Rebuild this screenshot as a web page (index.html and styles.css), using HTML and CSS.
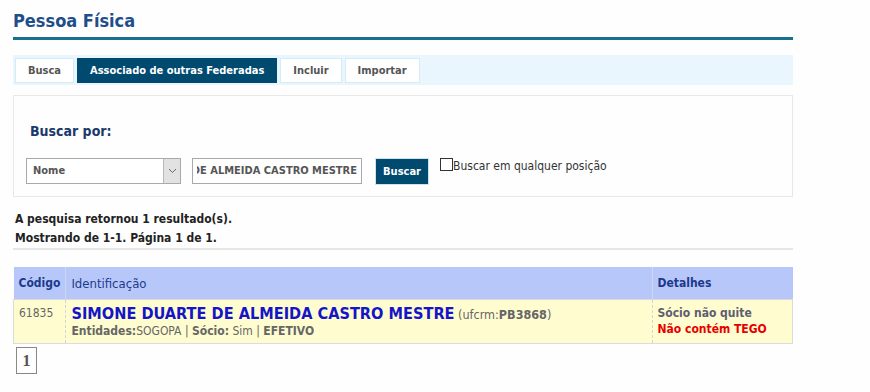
FILE: index.html
```html
<!DOCTYPE html>
<html lang="pt-BR">
<head>
  <meta charset="UTF-8" />
  <title>Pessoa Física</title>
  <link rel="stylesheet" href="styles.css">
</head>
<body>
  <div class="page">
    <h1 class="page-title">Pessoa Física</h1>

    <div class="tabs">
      <a class="tab" href="#">Busca</a>
      <a class="tab active" href="#">Associado de outras Federadas</a>
      <a class="tab" href="#">Incluir</a>
      <a class="tab" href="#">Importar</a>
    </div>

    <div class="search-box">
      <h3>Buscar por:</h3>
      <form class="search-row">
        <div class="select-wrap">
          <select class="field-select">
            <option>Nome</option>
          </select>
          <span class="select-arrow">
            <svg width="9" height="6" viewBox="0 0 9 6"><path d="M1 1l3.5 3.5L8 1" fill="none" stroke="#666" stroke-width="1"/></svg>
          </span>
        </div>
        <input class="field-text" type="text" dir="rtl" value="SIMONE DUARTE DE ALMEIDA CASTRO MESTRE">
        <button type="submit" class="btn-buscar">Buscar</button>
        <label class="check"><span class="box"></span>Buscar em qualquer posição</label>
      </form>
    </div>

    <div class="summary">
      A pesquisa retornou 1 resultado(s).<br>
      Mostrando de 1-1. Página 1 de 1.
    </div>

    <table class="results">
      <thead>
        <tr>
          <th class="col-cod">Código</th>
          <th class="col-id">Identificação</th>
          <th class="col-det">Detalhes</th>
        </tr>
      </thead>
      <tbody>
        <tr>
          <td class="cod">61835</td>
          <td>
            <a class="name" href="#">SIMONE DUARTE DE ALMEIDA CASTRO MESTRE</a>
            <span class="crm">(ufcrm:<b>PB3868</b>)</span>
            <div class="meta"><b>Entidades:</b>SOGOPA | <b>Sócio:</b> Sim | <b>EFETIVO</b></div>
          </td>
          <td class="det">
            <div class="quite">Sócio não quite</div>
            <div class="tego">Não contém TEGO</div>
          </td>
        </tr>
      </tbody>
    </table>

    <div class="pager"><span class="page-num">1</span></div>
  </div>
</body>
</html>
```

FILE: styles.css
```css
body {
  margin: 0;
  background-color: #fefefe;
  font-family: 'DejaVu Sans Condensed', 'DejaVu Sans', sans-serif;
  font-size: 12px;
  color: #333;
}

.page {
  width: 780px;
  margin-left: 13px;
  padding-top: 9px;
}

.page-title {
  margin: 0;
  font-size: 18px;
  font-weight: bold;
  color: #1f4e8c;
  line-height: 24px;
  padding-bottom: 4px;
  border-bottom: 3px solid #17708f;
}

.tabs {
  margin-top: 15px;
  height: 30px;
  background-color: #eaf6fd;
  display: flex;
  align-items: center;
  gap: 3px;
  padding-left: 2px;
}

.tab {
  display: block;
  height: 23px;
  line-height: 23px;
  padding: 0 12px;
  background-color: #fff;
  border: 1px solid #d5ebf7;
  color: #555;
  font-weight: bold;
  font-size: 11px;
  text-decoration: none;
}

.tab.active {
  background-color: #004a70;
  border-color: #004a70;
  color: #fff;
}

.search-box {
  margin-top: 10px;
  border: 1px solid #e8e8e8;
  height: 100px;
  padding: 0 12px;
}

.search-box h3 {
  margin: 26px 0 0 4px;
  font-size: 14px;
  font-weight: bold;
  color: #1a3a6a;
  line-height: 18px;
}

.search-row {
  margin-top: 16px;
  display: flex;
  align-items: center;
}

.select-wrap {
  position: relative;
  width: 155px;
  height: 26px;
}

.field-select {
  width: 155px;
  height: 26px;
  border: 1px solid #a9a9a9;
  background-color: #fff;
  padding-left: 6px;
  font-family: inherit;
  font-size: 11px;
  font-weight: bold;
  color: #555;
  appearance: none;
  -webkit-appearance: none;
  margin: 0;
}

.select-arrow {
  position: absolute;
  right: 1px;
  top: 1px;
  width: 16px;
  height: 24px;
  background-color: #e2e2e2;
  border-left: 1px solid #b8b8b8;
  display: flex;
  align-items: center;
  justify-content: center;
  pointer-events: none;
}

.field-text {
  margin: 0 0 0 11px;
  width: 170px;
  height: 26px;
  box-sizing: border-box;
  border: 1px solid #a9a9a9;
  padding: 0 4px;
  font-family: inherit;
  font-size: 11px;
  font-weight: bold;
  color: #555;
}

.btn-buscar {
  margin-left: 13px;
  margin-top: 2px;
  width: 54px;
  height: 27px;
  background-color: #004a70;
  border: 1px solid #cfe3ee;
  color: #fff;
  font-family: inherit;
  font-size: 11px;
  font-weight: bold;
  cursor: pointer;
}

.check {
  margin-left: 11px;
  align-self: flex-start;
  margin-top: 2px;
  display: flex;
  align-items: center;
  font-size: 12px;
  line-height: 16px;
  color: #333;
}

.check .box {
  width: 11px;
  height: 11px;
  border: 1px solid #333;
  background-color: #fff;
  align-self: flex-start;
}

.summary {
  margin-top: 13px;
  padding-left: 2px;
  font-weight: bold;
  color: #222;
  line-height: 19px;
  padding-bottom: 0;
  border-bottom: 2px solid #e6e6e6;
}

.results {
  margin-top: 17px;
  width: 100%;
  border-collapse: collapse;
}

.results th {
  background-color: #b7c7fa;
  color: #1c3a8c;
  text-align: left;
  height: 32px;
  padding: 0 5px;
  font-size: 12px;
}

.results th.col-id {
  font-weight: normal;
  font-size: 13px;
}

.results th + th {
  border-left: 1px solid #cfd6ec;
}

.col-cod {
  width: 41px;
}

.col-det {
  width: 130px;
}

.results tbody tr {
  background-color: #fffdd0;
  border: 1px solid #dcdcdc;
}

.results td {
  vertical-align: top;
  padding: 4px 5px 5px;
  border-top: 1px dashed #d4d4d4;
}

.results td + td {
  border-left: 1px dashed #d4d4d4;
}

.cod {
  color: #666;
  padding-top: 6px !important;
}

.name {
  color: #1414c8;
  font-size: 16.2px;
  font-weight: bold;
  text-decoration: none;
}

.crm {
  color: #666;
  font-size: 12.5px;
}

.meta {
  color: #666;
  margin-top: 1px;
}

.det {
  font-weight: bold;
  line-height: 16px;
  padding-top: 5px !important;
}

.quite {
  color: #5e5e70;
}

.tego {
  color: #e60000;
}

.pager {
  padding: 3px 3px;
}

.page-num {
  display: inline-block;
  width: 19px;
  height: 25px;
  border: 1px solid #888;
  font-family: 'Liberation Serif', serif;
  font-weight: bold;
  font-size: 16px;
  line-height: 25px;
  text-align: center;
  color: #555;
}
```
